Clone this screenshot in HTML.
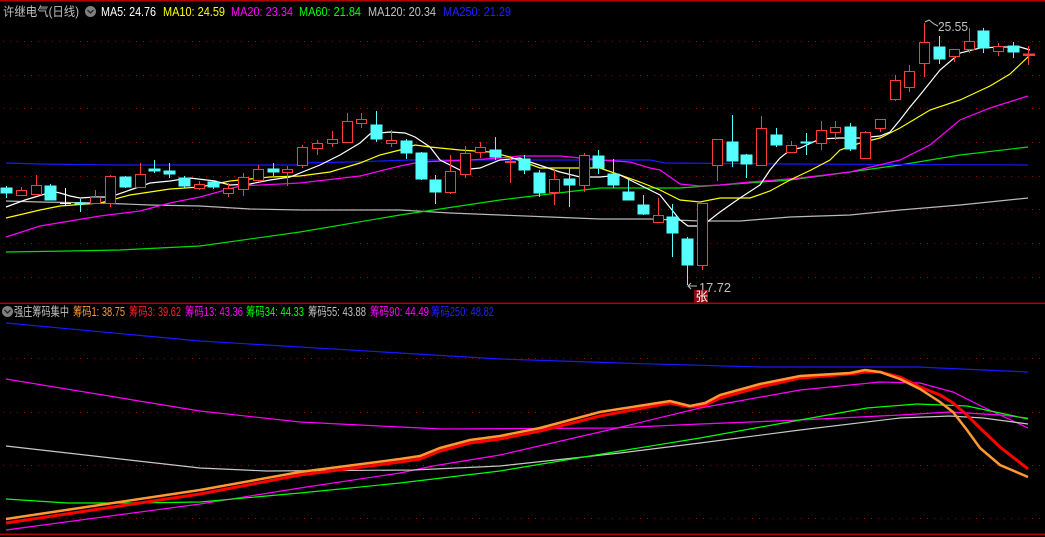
<!DOCTYPE html>
<html><head><meta charset="utf-8"><style>
html,body{margin:0;padding:0;background:#000;width:1045px;height:537px;overflow:hidden}
svg{display:block}
text{font-family:"Liberation Sans","Noto Sans CJK SC",sans-serif;font-size:12.5px}
</style></head><body>
<svg width="1045" height="537" viewBox="0 0 1045 537" xmlns="http://www.w3.org/2000/svg">
<rect width="1045" height="537" fill="#000"/>
<g stroke="#a00000" stroke-width="1" stroke-dasharray="1,6" shape-rendering="crispEdges">
<line x1="3" y1="41.5" x2="1045" y2="41.5"/><line x1="3" y1="75.5" x2="1045" y2="75.5"/>
<line x1="3" y1="108.5" x2="1045" y2="108.5"/><line x1="3" y1="142.5" x2="1045" y2="142.5"/>
<line x1="3" y1="176.5" x2="1045" y2="176.5"/><line x1="3" y1="209.5" x2="1045" y2="209.5"/>
<line x1="3" y1="243.5" x2="1045" y2="243.5"/><line x1="3" y1="277.5" x2="1045" y2="277.5"/>
<line x1="3" y1="358.5" x2="1045" y2="358.5"/><line x1="3" y1="412.5" x2="1045" y2="412.5"/>
<line x1="3" y1="465.5" x2="1045" y2="465.5"/><line x1="3" y1="518.5" x2="1045" y2="518.5"/>
</g>
<g stroke="#b00000" stroke-width="1.5" shape-rendering="crispEdges">
<line x1="0" y1="0.5" x2="1045" y2="0.5"/><line x1="0" y1="303" x2="1045" y2="303"/><line x1="0" y1="534" x2="1045" y2="534"/>
</g>

<g fill="none" stroke-width="1.2">
<polyline stroke="#b8b8b8" points="6,201 40,202 100,203 150,205 200,206 250,209 300,210 400,210 450,213 500,215 550,217 600,219 650,219 700,221 740,221 790,217 850,215 900,210 960,205 1028,198"/>
<polyline stroke="#00e000" points="6,252 70,251 120,250 200,246 300,232 400,215 500,200 600,188 640,188 680,188 720,185 790,180 850,172 900,165 960,155 1028,147"/>
<polyline stroke="#1818ff" points="6,163 40,164 117,165 300,165 300,163 350,162 410,160 650,160 665,163 790,164 1028,165"/>
<polyline stroke="#ff00ff" points="6,237 40,226 70,221 100,216 140,211 170,203 200,197 240,186 300,183 360,176 400,166 420,162 470,160 500,158 520,156 560,156 600,160 630,162 650,168 660,170 680,184 700,186 720,185 750,182 800,178 850,172 900,160 930,145 960,120 990,108 1028,96"/>
<polyline stroke="#ffff00" points="6,218 40,210 60,206 100,203 130,195 170,189 200,187 230,181 270,177 300,176 330,172 360,163 380,155 400,150 415,145 430,147 460,150 490,152 510,157 540,168 600,168 620,175 640,182 660,190 680,200 700,202 720,198 750,198 770,191 790,180 811,170 830,160 840,150 860,143 880,138 900,128 930,110 960,100 990,86 1010,74 1030,55"/>
<polyline stroke="#ffffff" points="6,207 25,200 45,194 55,192 60,193 70,196 80,198 95,197 110,197 130,190 150,183 170,181 190,178 215,181 230,185 250,184 270,180 290,177 320,165 340,155 360,143 370,134 390,132 405,133 415,137 430,147 440,160 460,170 480,168 500,160 520,158 530,162 560,172 580,177 600,177 620,175 640,185 660,195 680,220 688,226 702,226 720,212 740,198 760,185 770,170 780,158 790,150 800,148 820,139 840,138 860,138 880,136 890,132 900,120 910,107 920,95 940,70 960,53 980,48 1000,47 1020,47 1030,50"/>
</g>

<g shape-rendering="crispEdges" stroke-width="1">
<g stroke="#55ffff" fill="#55ffff">
<line x1="6.5" y1="186" x2="6.5" y2="198"/><rect x="1" y="188" width="11" height="5"/>
<line x1="50.5" y1="184" x2="50.5" y2="200"/><rect x="45" y="186" width="11" height="14"/>
<line x1="80.5" y1="199" x2="80.5" y2="212"/><rect x="75" y="203" width="11" height="1"/>
<line x1="125.5" y1="176" x2="125.5" y2="188"/><rect x="120" y="177" width="11" height="10"/>
<line x1="154.5" y1="160" x2="154.5" y2="173"/><rect x="149" y="169" width="11" height="2"/>
<line x1="169.5" y1="163" x2="169.5" y2="178"/><rect x="164" y="171" width="11" height="3"/>
<line x1="184.5" y1="176" x2="184.5" y2="188"/><rect x="179" y="178" width="11" height="8"/>
<line x1="213.5" y1="181" x2="213.5" y2="189"/><rect x="208" y="182" width="11" height="5"/>
<line x1="273.5" y1="163" x2="273.5" y2="176"/><rect x="268" y="169" width="11" height="3"/>
<line x1="376.5" y1="111" x2="376.5" y2="142"/><rect x="371" y="125" width="11" height="14"/>
<line x1="406.5" y1="139" x2="406.5" y2="159"/><rect x="401" y="141" width="11" height="12"/>
<line x1="421.5" y1="152" x2="421.5" y2="180"/><rect x="416" y="153" width="11" height="26"/>
<line x1="435.5" y1="175" x2="435.5" y2="204"/><rect x="430" y="180" width="11" height="12"/>
<line x1="495.5" y1="137" x2="495.5" y2="160"/><rect x="490" y="150" width="11" height="7"/>
<line x1="524.5" y1="155" x2="524.5" y2="174"/><rect x="519" y="159" width="11" height="11"/>
<line x1="539.5" y1="170" x2="539.5" y2="197"/><rect x="534" y="173" width="11" height="20"/>
<line x1="569.5" y1="168" x2="569.5" y2="207"/><rect x="564" y="179" width="11" height="6"/>
<line x1="598.5" y1="150" x2="598.5" y2="174"/><rect x="593" y="156" width="11" height="12"/>
<line x1="613.5" y1="159" x2="613.5" y2="188"/><rect x="608" y="174" width="11" height="11"/>
<line x1="628.5" y1="180" x2="628.5" y2="200"/><rect x="623" y="192" width="11" height="8"/>
<line x1="643.5" y1="195" x2="643.5" y2="215"/><rect x="638" y="205" width="11" height="9"/>
<line x1="672.5" y1="204" x2="672.5" y2="257"/><rect x="667" y="217" width="11" height="16"/>
<line x1="687.5" y1="237" x2="687.5" y2="285"/><rect x="682" y="239" width="11" height="26"/>
<line x1="732.5" y1="115" x2="732.5" y2="167"/><rect x="727" y="142" width="11" height="19"/>
<line x1="746.5" y1="154" x2="746.5" y2="178"/><rect x="741" y="155" width="11" height="9"/>
<line x1="776.5" y1="128" x2="776.5" y2="147"/><rect x="771" y="135" width="11" height="10"/>
<line x1="806.5" y1="133" x2="806.5" y2="155"/><rect x="801" y="142" width="11" height="1"/>
<line x1="850.5" y1="123" x2="850.5" y2="151"/><rect x="845" y="127" width="11" height="22"/>
<line x1="939.5" y1="36" x2="939.5" y2="64"/><rect x="934" y="47" width="11" height="12"/>
<line x1="983.5" y1="28" x2="983.5" y2="53"/><rect x="978" y="31" width="11" height="17"/>
<line x1="1013.5" y1="42" x2="1013.5" y2="58"/><rect x="1008" y="46" width="11" height="6"/>
</g>
<g stroke="#ffffff"><line x1="65.5" y1="188" x2="65.5" y2="205"/><line x1="60" y1="203.5" x2="71" y2="203.5"/></g>
<g stroke="#ff3b3b" fill="#000">
<line x1="21.5" y1="187" x2="21.5" y2="196"/><rect x="16.5" y="190.5" width="10" height="5"/>
<line x1="36.5" y1="175" x2="36.5" y2="195"/><rect x="31.5" y="185.5" width="10" height="9"/>
<line x1="95.5" y1="190" x2="95.5" y2="203"/><rect x="90.5" y="197.5" width="10" height="6"/>
<line x1="110.5" y1="175" x2="110.5" y2="207"/><rect x="105.5" y="176.5" width="10" height="27"/>
<line x1="140.5" y1="163" x2="140.5" y2="188"/><rect x="135.5" y="174.5" width="10" height="13"/>
<line x1="199.5" y1="181" x2="199.5" y2="190"/><rect x="194.5" y="184.5" width="10" height="4"/>
<line x1="228.5" y1="183" x2="228.5" y2="197"/><rect x="223.5" y="188.5" width="10" height="5"/>
<line x1="243.5" y1="173" x2="243.5" y2="196"/><rect x="238.5" y="177.5" width="10" height="12"/>
<line x1="258.5" y1="165" x2="258.5" y2="182"/><rect x="253.5" y="169.5" width="10" height="11"/>
<line x1="287.5" y1="166" x2="287.5" y2="186"/><rect x="282.5" y="169.5" width="10" height="3"/>
<line x1="302.5" y1="145" x2="302.5" y2="168"/><rect x="297.5" y="147.5" width="10" height="18"/>
<line x1="317.5" y1="140" x2="317.5" y2="155"/><rect x="312.5" y="143.5" width="10" height="5"/>
<line x1="332.5" y1="131" x2="332.5" y2="147"/><rect x="327.5" y="139.5" width="10" height="4"/>
<line x1="347.5" y1="113" x2="347.5" y2="143"/><rect x="342.5" y="121.5" width="10" height="21"/>
<line x1="361.5" y1="113" x2="361.5" y2="128"/><rect x="356.5" y="119.5" width="10" height="4"/>
<line x1="391.5" y1="130" x2="391.5" y2="147"/><rect x="386.5" y="140.5" width="10" height="3"/>
<line x1="450.5" y1="155" x2="450.5" y2="194"/><rect x="445.5" y="171.5" width="10" height="21"/>
<line x1="465.5" y1="146" x2="465.5" y2="178"/><rect x="460.5" y="153.5" width="10" height="21"/>
<line x1="480.5" y1="142" x2="480.5" y2="158"/><rect x="475.5" y="147.5" width="10" height="5"/>
<line x1="510.5" y1="158" x2="510.5" y2="183"/><rect x="505.5" y="161.5" width="10" height="1" fill="#ff3b3b"/>
<line x1="554.5" y1="170" x2="554.5" y2="205"/><rect x="549.5" y="179.5" width="10" height="13"/>
<line x1="584.5" y1="153" x2="584.5" y2="192"/><rect x="579.5" y="155.5" width="10" height="30"/>
<line x1="658.5" y1="198" x2="658.5" y2="222"/><rect x="653.5" y="215.5" width="10" height="7"/>
<line x1="702.5" y1="203" x2="702.5" y2="270"/><rect x="697.5" y="203.5" width="10" height="62"/>
<line x1="717.5" y1="139" x2="717.5" y2="181"/><rect x="712.5" y="139.5" width="10" height="26"/>
<line x1="761.5" y1="116" x2="761.5" y2="166"/><rect x="756.5" y="128.5" width="10" height="37"/>
<line x1="791.5" y1="141" x2="791.5" y2="152"/><rect x="786.5" y="145.5" width="10" height="7"/>
<line x1="821.5" y1="121" x2="821.5" y2="150"/><rect x="816.5" y="130.5" width="10" height="13"/>
<line x1="835.5" y1="121" x2="835.5" y2="140"/><rect x="830.5" y="127.5" width="10" height="5"/>
<line x1="865.5" y1="131" x2="865.5" y2="158"/><rect x="860.5" y="132.5" width="10" height="26"/>
<line x1="880.5" y1="119" x2="880.5" y2="132"/><rect x="875.5" y="119.5" width="10" height="9"/>
<line x1="895.5" y1="75" x2="895.5" y2="101"/><rect x="890.5" y="80.5" width="10" height="19"/>
<line x1="909.5" y1="65" x2="909.5" y2="92"/><rect x="904.5" y="71.5" width="10" height="16"/>
<line x1="924.5" y1="23" x2="924.5" y2="77"/><rect x="919.5" y="42.5" width="10" height="21"/>
<line x1="954.5" y1="49" x2="954.5" y2="62"/><rect x="949.5" y="49.5" width="10" height="7"/>
<line x1="969.5" y1="28" x2="969.5" y2="53"/><rect x="964.5" y="41.5" width="10" height="8"/>
<line x1="998.5" y1="43" x2="998.5" y2="56"/><rect x="993.5" y="46.5" width="10" height="5"/>
<line x1="1028.5" y1="46" x2="1028.5" y2="65"/><rect x="1023.5" y="54" width="11" height="1.5" fill="#ff3b3b"/>
</g>
</g>

<g stroke="#c0c0c0" fill="none" stroke-width="1">
<polyline points="925,22 929,20 934,24 938,26"/>
<polyline points="688,286 697,286"/><polyline points="691,283 688,286 691,289"/>
</g>
<text x="938" y="31" fill="#c0c0c0" font-size="13" textLength="30" lengthAdjust="spacingAndGlyphs">25.55</text>
<text x="699" y="292" fill="#c0c0c0" font-size="13" textLength="32" lengthAdjust="spacingAndGlyphs">17.72</text>
<rect x="694" y="290" width="14" height="13" fill="#8a0a0a"/>
<text x="695.5" y="301" fill="#ffffff" font-size="11">张</text>

<g fill="none">
<polyline stroke="#1818ff" stroke-width="1.2" points="6,323 200,341 400,353 500,359 620,363 760,367 917,367 1028,372"/>
<polyline stroke="#ff00ff" stroke-width="1.2" points="6,379 200,411 300,422 400,427 443,429 613,428 700,424 800,420 900,415 950,412 1000,415 1028,418"/>
<polyline stroke="#ff00ff" stroke-width="1.2" points="6,530 200,504 300,488 400,473 433,466 500,455 613,429 700,408 800,390 880,382 920,383 953,392 983,407 1028,428"/>
<polyline stroke="#c8c8c8" stroke-width="1.2" points="6,446 200,468 267,471 413,470 500,466 620,453 700,443 800,430 900,418 950,416 983,418 1028,424"/>
<polyline stroke="#00ff00" stroke-width="1.2" points="6,499 67,503 130,503 200,502 300,493 400,483 500,471 620,451 700,438 800,420 867,408 917,404 967,406 1000,413 1028,419"/>
<polyline stroke="#ff0000" stroke-width="3" points="6,523 200,494 300,475 400,462 420,459 440,451 470,443 500,439 540,431 600,416 670,403 690,407 705,405 720,398 760,387 800,378 850,374 865,372 880,372 900,377 920,387 940,395 953,403 967,415 980,428 1000,447 1028,469"/>
<polyline stroke="#ff9933" stroke-width="2.5" points="6,519 200,490 300,472 400,459 420,456 440,448 470,440 500,436 540,428 600,412 670,401 690,406 705,403 720,395 760,384 800,376 850,373 865,370 880,372 900,379 920,389 940,402 953,412 967,430 980,448 1000,465 1028,477"/>
</g>

<g font-size="12.5">
<text x="3" y="16" fill="#c0c0c0" textLength="76" lengthAdjust="spacingAndGlyphs">许继电气(日线)</text>
<text x="101" y="16" fill="#ffffff" textLength="55" lengthAdjust="spacingAndGlyphs">MA5: 24.76</text>
<text x="163" y="16" fill="#ffff00" textLength="62" lengthAdjust="spacingAndGlyphs">MA10: 24.59</text>
<text x="231" y="16" fill="#ff00ff" textLength="62" lengthAdjust="spacingAndGlyphs">MA20: 23.34</text>
<text x="299" y="16" fill="#00ff00" textLength="62" lengthAdjust="spacingAndGlyphs">MA60: 21.84</text>
<text x="368" y="16" fill="#c0c0c0" textLength="68" lengthAdjust="spacingAndGlyphs">MA120: 20.34</text>
<text x="443" y="16" fill="#2020ff" textLength="68" lengthAdjust="spacingAndGlyphs">MA250: 21.29</text>
</g>
<circle cx="90.5" cy="11.5" r="5.5" fill="#808080"/>
<polyline points="87.5,10 90.5,13 93.5,10" fill="none" stroke="#222" stroke-width="1.3"/>

<circle cx="7.5" cy="311.5" r="5.5" fill="#808080"/>
<polyline points="4.5,310 7.5,313 10.5,310" fill="none" stroke="#222" stroke-width="1.3"/>
<g font-size="12.5">
<text x="14" y="316" fill="#c0c0c0" textLength="55" lengthAdjust="spacingAndGlyphs">强庄筹码集中</text>
<text x="73" y="316" fill="#ff9933" textLength="52" lengthAdjust="spacingAndGlyphs">筹码1: 38.75</text>
<text x="129" y="316" fill="#ff2020" textLength="52" lengthAdjust="spacingAndGlyphs">筹码3: 39.62</text>
<text x="185" y="316" fill="#ff00ff" textLength="58" lengthAdjust="spacingAndGlyphs">筹码13: 43.36</text>
<text x="246" y="316" fill="#00ff00" textLength="58" lengthAdjust="spacingAndGlyphs">筹码34: 44.33</text>
<text x="308" y="316" fill="#c0c0c0" textLength="58" lengthAdjust="spacingAndGlyphs">筹码55: 43.88</text>
<text x="370" y="316" fill="#ff00ff" textLength="59" lengthAdjust="spacingAndGlyphs">筹码90: 44.49</text>
<text x="431" y="316" fill="#2020ff" textLength="63" lengthAdjust="spacingAndGlyphs">筹码250: 48.82</text>
</g>
</svg>
</body></html>
